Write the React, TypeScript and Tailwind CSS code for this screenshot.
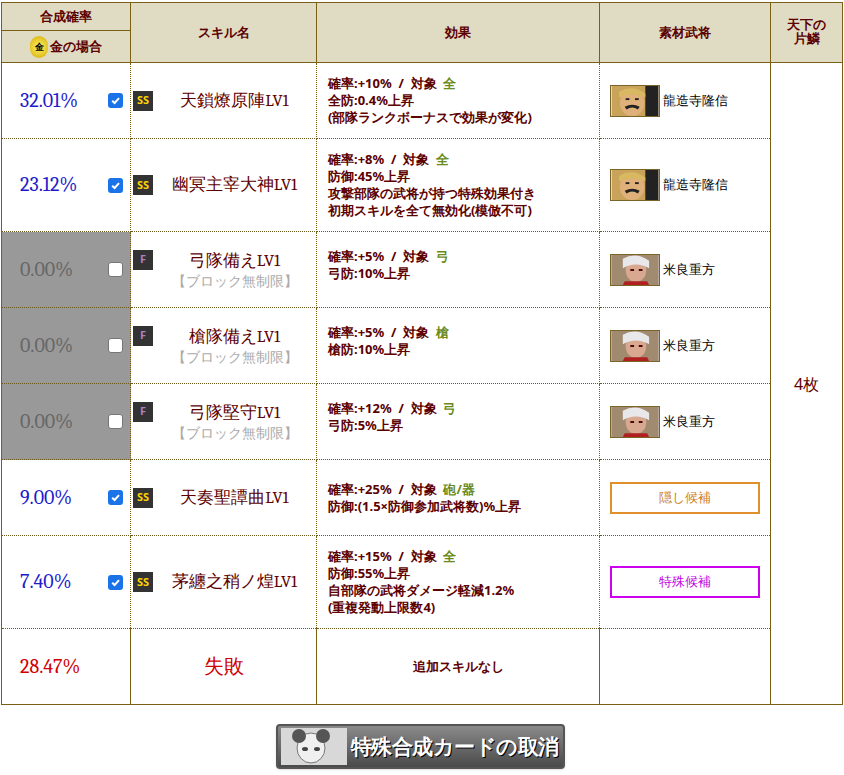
import React from "react";

type Row = {
  rate: string;
  on: boolean;
  kind: "SS" | "F";
  name: string;
  block?: boolean;
  effect: { rate: string; target: string; lines: string[] };
  mat: { type: "face"; name: string; who: "a" | "b" } | { type: "btn"; label: string; color: string };
  h: string;
};

const rows: Row[] = [
  { rate: "32.01%", on: true, kind: "SS", name: "天鎖燎原陣LV1", effect: { rate: "+10%", target: "全", lines: ["全防:0.4%上昇", "(部隊ランクボーナスで効果が変化)"] }, mat: { type: "face", name: "龍造寺隆信", who: "a" }, h: "h-[76px]" },
  { rate: "23.12%", on: true, kind: "SS", name: "幽冥主宰大神LV1", effect: { rate: "+8%", target: "全", lines: ["防御:45%上昇", "攻撃部隊の武将が持つ特殊効果付き", "初期スキルを全て無効化(模倣不可)"] }, mat: { type: "face", name: "龍造寺隆信", who: "a" }, h: "h-[93px]" },
  { rate: "0.00%", on: false, kind: "F", name: "弓隊備えLV1", block: true, effect: { rate: "+5%", target: "弓", lines: ["弓防:10%上昇"] }, mat: { type: "face", name: "米良重方", who: "b" }, h: "h-[76px]" },
  { rate: "0.00%", on: false, kind: "F", name: "槍隊備えLV1", block: true, effect: { rate: "+5%", target: "槍", lines: ["槍防:10%上昇"] }, mat: { type: "face", name: "米良重方", who: "b" }, h: "h-[76px]" },
  { rate: "0.00%", on: false, kind: "F", name: "弓隊堅守LV1", block: true, effect: { rate: "+12%", target: "弓", lines: ["弓防:5%上昇"] }, mat: { type: "face", name: "米良重方", who: "b" }, h: "h-[76px]" },
  { rate: "9.00%", on: true, kind: "SS", name: "天奏聖譚曲LV1", effect: { rate: "+25%", target: "砲/器", lines: ["防御:(1.5×防御参加武将数)%上昇"] }, mat: { type: "btn", label: "隠し候補", color: "orange" }, h: "h-[76px]" },
  { rate: "7.40%", on: true, kind: "SS", name: "茅纏之稍ノ煌LV1", effect: { rate: "+15%", target: "全", lines: ["防御:55%上昇", "自部隊の武将ダメージ軽減1.2%", "(重複発動上限数4)"] }, mat: { type: "btn", label: "特殊候補", color: "purple" }, h: "h-[93px]" },
];

const serif = "font-serif";
const sans = "font-['Noto_Sans_CJK_JP',sans-serif]";
const dot = "border-b border-dotted border-b-[#6b5a1e]";

function Face({ who }: { who: "a" | "b" }) {
  return (
    <svg width="50" height="32" viewBox="0 0 50 32" className="border border-[#7a6428] shrink-0">
      <rect width="50" height="32" fill={who === "a" ? "#c9a35a" : "#8a7a6a"} />
      {who === "a" ? (
        <>
          <rect x="36" y="0" width="14" height="32" fill="#222" />
          <ellipse cx="22" cy="18" rx="13" ry="14" fill="#e0b07a" />
          <path d="M8 6 Q22 -2 36 8 L36 12 Q22 6 8 12Z" fill="#d8b860" />
          <path d="M14 22 Q22 18 30 22 L28 25 Q22 21 16 25Z" fill="#222" />
          <rect x="15" y="13" width="4" height="2" fill="#222" />
          <rect x="25" y="13" width="4" height="2" fill="#222" />
        </>
      ) : (
        <>
          <path d="M0 0 H50 V32 H0Z" fill="#a08a70" />
          <ellipse cx="26" cy="16" rx="11" ry="13" fill="#d8a890" />
          <path d="M12 4 Q26 -4 40 6 L40 14 Q26 6 12 14Z" fill="#e8e8ea" />
          <rect x="20" y="15" width="4" height="2" fill="#400" />
          <rect x="29" y="15" width="4" height="2" fill="#400" />
          <path d="M14 28 L38 28 L40 32 L12 32Z" fill="#b02020" />
        </>
      )}
    </svg>
  );
}

function Check({ on }: { on: boolean }) {
  return on ? (
    <span className="w-[15px] h-[15px] rounded-[3px] bg-[#1a73e8] flex items-center justify-center shrink-0">
      <svg width="11" height="11" viewBox="0 0 10 10"><path d="M2 5.2 L4.2 7.3 L8.2 2.8" stroke="#fff" strokeWidth="1.8" fill="none" /></svg>
    </span>
  ) : (
    <span className="w-[15px] h-[15px] rounded-[3px] bg-white border border-[#767676] shrink-0" />
  );
}

export default function App() {
  return (
    <div className="w-[844px] h-[775px] bg-white pt-[2px] pl-[1px]">
      <table className="border-collapse border border-[#7a5f14] w-[841px] table-fixed text-[#5c0000]">
        <colgroup>
          <col className="w-[129px]" />
          <col className="w-[186px]" />
          <col className="w-[283px]" />
          <col className="w-[171px]" />
          <col className="w-[72px]" />
        </colgroup>
        <thead className={`bg-[#e0dbc3] ${sans} font-bold text-[13px]`}>
          <tr className="h-[28px]">
            <th className="border border-[#7a5f14] font-bold">合成確率</th>
            <th rowSpan={2} className="border border-[#7a5f14] font-bold">スキル名</th>
            <th rowSpan={2} className="border border-[#7a5f14] font-bold">効果</th>
            <th rowSpan={2} className="border border-[#7a5f14] font-bold">素材武将</th>
            <th rowSpan={2} className="border border-[#7a5f14] font-bold align-top pt-[14px]">
              <div className="leading-[14px]">天下の</div>
              <div className="leading-[14px]">片鱗</div>
            </th>
          </tr>
          <tr className="h-[32px]">
            <th className="border border-[#7a5f14]">
              <div className="flex items-center justify-center gap-[2px]">
                <span className="w-[18px] h-[22px] rounded-full bg-[radial-gradient(circle,#fff36a,#d4aa00)] flex items-center justify-center text-[9px] text-black">金</span>
                <span>金の場合</span>
              </div>
            </th>
          </tr>
        </thead>
        <tbody>
          {rows.map((r, i) => (
            <tr key={i} className={r.h}>
              <td className={`border-r border-r-[#7a5f14] ${dot} ${r.on ? "bg-white" : "bg-[#999999]"}`}>
                <div className="flex items-center justify-between pl-[18px] pr-[7px]">
                  <span className={`${serif} text-[20px] ${r.on ? "text-[#1c1ccc]" : "text-[#666]"}`}>{r.rate}</span>
                  <Check on={r.on} />
                </div>
              </td>
              <td className={`border-r border-r-[#7a5f14] ${dot} align-middle`}>
                <div className={`flex ${r.block ? "items-start" : "items-center"} pl-[2px]`}>
                  <span className={`w-[20px] h-[20px] bg-[#333] flex items-center justify-center text-[11px] font-bold ${sans} shrink-0 ${r.kind === "SS" ? "text-[#ffd400]" : "text-[#b080c0]"}`}>{r.kind}</span>
                  <div className="flex-1 text-center">
                    <div className={`${serif} text-[17px] leading-[22px] text-[#5c0000]`}>{r.name}</div>
                    {r.block && <div className={`${sans} text-[14px] leading-[18px] text-[#aaa]`}>【ブロック無制限】</div>}
                  </div>
                </div>
              </td>
              <td className={`border-r border-r-[#7a5f14] ${dot} pl-[11px] ${sans} font-bold text-[13px] leading-[17px] ${r.block ? "align-top pt-[16px]" : ""}`}>
                <div className="whitespace-pre">確率:{r.effect.rate}  /  対象  <span className="text-[#6a8a1a]">{r.effect.target}</span></div>
                {r.effect.lines.map((l) => <div key={l}>{l}</div>)}
              </td>
              <td className={`border-r border-r-[#7a5f14] ${dot} pl-[10px]`}>
                {r.mat.type === "face" ? (
                  <div className="flex items-center gap-[3px]">
                    <Face who={r.mat.who} />
                    <span className={`${sans} text-[13px] text-black`}>{r.mat.name}</span>
                  </div>
                ) : (
                  <div className={`w-[150px] h-[32px] border-2 flex items-center justify-center ${sans} text-[13px] ${r.mat.color === "orange" ? "border-[#e0902a] text-[#d08020]" : "border-[#cc00ee] text-[#c000e0]"}`}>{r.mat.label}</div>
                )}
              </td>
              {i === 0 && (
                <td rowSpan={8} className={`${sans} text-[16px] text-[#5c0000] text-center border-l border-l-[#7a5f14]`}>4枚</td>
              )}
            </tr>
          ))}
          <tr className="h-[76px]">
            <td className={`border-r border-r-[#7a5f14] ${serif} text-[20px] text-[#d00000] pl-[18px]`}>28.47%</td>
            <td className={`border-r border-r-[#7a5f14] ${serif} text-[20px] text-[#d00000] text-center`}>失敗</td>
            <td className={`border-r border-r-[#7a5f14] ${sans} font-bold text-[13px] text-center`}>追加スキルなし</td>
            <td className="border-r border-r-[#7a5f14]"></td>
          </tr>
        </tbody>
      </table>
      <div className="flex justify-center mt-[19px] pr-[5px]">
        <div className="w-[289px] h-[45px] rounded-[4px] border-2 border-[#555] bg-[linear-gradient(#8a8a8a,#4a4a4a)] flex items-center p-[3px] gap-[4px] shadow">
          <svg width="66" height="37" viewBox="0 0 66 37" className="shrink-0">
            <rect width="66" height="37" fill="#d8d8d8" />
            <ellipse cx="30" cy="20" rx="14" ry="15" fill="#f0f0f0" stroke="#777" />
            <circle cx="18" cy="8" r="7" fill="#555" />
            <circle cx="42" cy="8" r="7" fill="#555" />
            <ellipse cx="24" cy="21" rx="3" ry="2" fill="#444" />
            <ellipse cx="36" cy="21" rx="3" ry="2" fill="#444" />
          </svg>
          <span className={`${sans} font-bold text-[21px] text-white tracking-[-0.5px] [text-shadow:1px_1px_0_#000]`}>特殊合成カードの取消</span>
        </div>
      </div>
    </div>
  );
}
